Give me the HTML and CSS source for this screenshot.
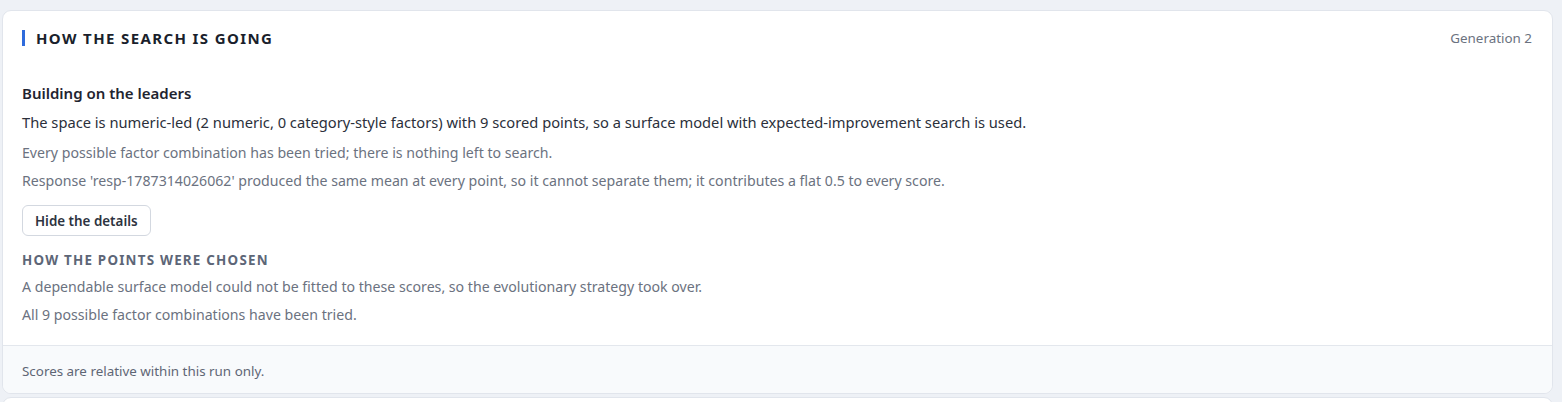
FILE: index.html
```html
<!DOCTYPE html>
<html lang="en">
<head>
<meta charset="utf-8">
<title>How the search is going</title>
<link rel="stylesheet" href="styles.css">
</head>
<body>
<main class="page">
  <section class="card">
    <header class="card-head">
      <h2 class="card-title">HOW THE SEARCH IS GOING</h2>
      <span class="gen">Generation 2</span>
    </header>
    <div class="card-body">
      <h3 class="lead-title">Building on the leaders</h3>
      <p class="lead-text">The space is numeric-led (2 numeric, 0 category-style factors) with 9 scored points, so a surface model with expected-improvement search is used.</p>
      <p class="note">Every possible factor combination has been tried; there is nothing left to search.</p>
      <p class="note">Response 'resp-1787314026062' produced the same mean at every point, so it cannot separate them; it contributes a flat 0.5 to every score.</p>
      <button class="toggle" type="button">Hide the details</button>
      <h4 class="sub-title">HOW THE POINTS WERE CHOSEN</h4>
      <p class="note">A dependable surface model could not be fitted to these scores, so the evolutionary strategy took over.</p>
      <p class="note">All 9 possible factor combinations have been tried.</p>
    </div>
    <footer class="card-foot">Scores are relative within this run only.</footer>
  </section>
  <section class="card next"></section>
</main>
</body>
</html>
```

FILE: styles.css
```css
html, body {
  margin: 0;
  padding: 0;
  background: #eef1f6;
  height: 100%;
  overflow: hidden;
}
body {
  font-family: "Noto Sans", "Open Sans", "Liberation Sans", sans-serif;
  color: #1f2430;
}
.page {
  padding: 10px 9px 0 2px;
  display: flex;
  flex-direction: column;
  gap: 3px;
}
.card {
  background: #ffffff;
  border: 1px solid #e1e5ec;
  border-radius: 9px;
  overflow: hidden;
}
.card-head {
  display: flex;
  align-items: center;
  justify-content: space-between;
  padding: 17px 20px 1px 19px;
  height: 20px;
}
.card-title {
  margin: 0;
  font-size: 15px;
  font-weight: 700;
  letter-spacing: 1.38px;
  color: #1a1f2c;
  border-left: 3px solid #2f6bdc;
  padding-left: 11px;
  line-height: 16px;
}
.gen {
  font-size: 13.4px;
  color: #6b7280;
}
.card-body {
  padding: 33px 20px 20px 19px;
}
.lead-title {
  margin: 0;
  font-size: 15px;
  font-weight: 600;
  color: #1f2430;
  line-height: 22px;
}
.lead-text {
  margin: 8px 0 0;
  font-size: 14.7px;
  color: #2b303b;
  line-height: 20px;
}
.note {
  margin: 8px 0 0;
  font-size: 14.15px;
  color: #6b7280;
  line-height: 20px;
}
.lead-text + .note {
  margin-top: 11px;
}
.toggle {
  display: block;
  margin: 14px 0 0;
  height: 31px;
  padding: 0 12px;
  border: 1px solid #d3d8e0;
  border-radius: 6px;
  background: #ffffff;
  font-family: inherit;
  font-size: 13.4px;
  font-weight: 600;
  color: #2d3340;
}
.sub-title {
  margin: 14px 0 0;
  font-size: 13.4px;
  font-weight: 700;
  letter-spacing: 1.22px;
  color: #5d6677;
  line-height: 20px;
}
.sub-title + .note {
  margin-top: 7px;
}
.card-foot {
  border-top: 1px solid #e3e7ed;
  background: #f8fafc;
  padding: 16px 19px 13px;
  font-size: 13.4px;
  color: #5f6675;
  line-height: 18px;
}
.next {
  height: 40px;
}
```
